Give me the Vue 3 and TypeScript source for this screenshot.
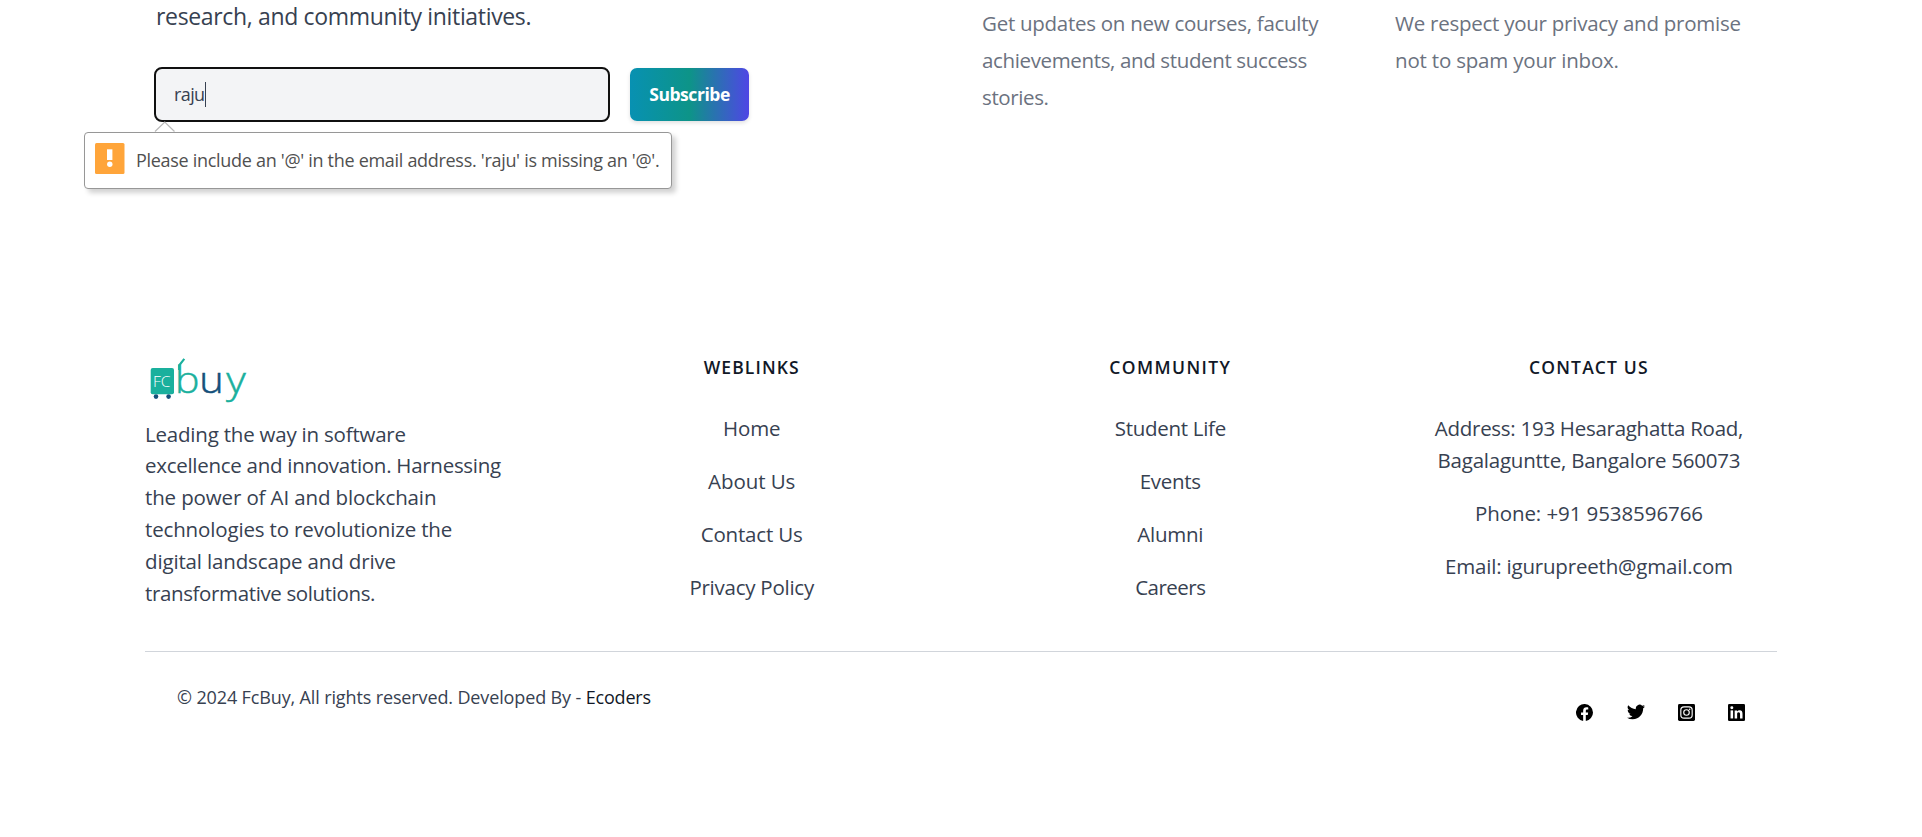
<script setup lang="ts">
import { ref } from 'vue'

interface Line {
  text: string
  tracking: number
}
interface LinkColumn {
  title: Line
  items: Line[][]
}

const line = (text: string, tracking: number): Line => ({ text, tracking })
const track = (l: Line) => ({ letterSpacing: `${l.tracking}px` })

const email = ref('raju')

const intro = line('research, and community initiatives.', -0.34)
const warning = line("Please include an '@' in the email address. 'raju' is missing an '@'.", -0.3)

const features: Line[][] = [
  [
    line('Get updates on new courses, faculty', -0.27),
    line('achievements, and student success', -0.36),
    line('stories.', -0.39),
  ],
  [line('We respect your privacy and promise', -0.25), line('not to spam your inbox.', -0.19)],
]

const about: Line[] = [
  line('Leading the way in software', -0.21),
  line('excellence and innovation. Harnessing', -0.28),
  line('the power of AI and blockchain', -0.13),
  line('technologies to revolutionize the', -0.15),
  line('digital landscape and drive', -0.15),
  line('transformative solutions.', -0.37),
]

const columns: LinkColumn[] = [
  {
    title: line('WEBLINKS', 1.1),
    items: [
      [line('Home', -0.14)],
      [line('About Us', -0.07)],
      [line('Contact Us', -0.16)],
      [line('Privacy Policy', -0.25)],
    ],
  },
  {
    title: line('COMMUNITY', 1.4),
    items: [
      [line('Student Life', -0.29)],
      [line('Events', -0.28)],
      [line('Alumni', -0.25)],
      [line('Careers', -0.5)],
    ],
  },
  {
    title: line('CONTACT US', 1.15),
    items: [
      [line('Address: 193 Hesaraghatta Road,', -0.28), line('Bagalaguntte, Bangalore 560073', -0.23)],
      [line('Phone: +91 9538596766', -0.08)],
      [line('Email: igurupreeth@gmail.com', -0.19)],
    ],
  },
]
</script>

<template>
  <div class="page">
    <section class="newsletter">
      <div class="signup">
        <p class="intro" :style="track(intro)">{{ intro.text }}</p>
        <form class="form" @submit.prevent>
          <div class="field">
            <span class="value">{{ email }}</span><span class="caret"></span>
          </div>
          <button class="subscribe" type="submit">Subscribe</button>
        </form>
      </div>
      <p v-for="(feature, i) in features" :key="i" class="feature">
        <span v-for="l in feature" :key="l.text" class="line" :style="track(l)">{{ l.text }}</span>
      </p>

      <div class="bubble" role="alert">
        <svg class="arrow" width="22" height="12" viewBox="0 0 22 12">
          <path d="M1 10.5 10.8 1 20.5 10.5" fill="#fff" stroke="#b9b9b9" stroke-width="1.2" />
        </svg>
        <svg class="alert" width="30" height="31" viewBox="0 0 30 31">
          <rect width="29.5" height="31" rx="1.5" fill="#ffa53a" />
          <rect x="12" y="6.3" width="5.4" height="10.7" fill="#fff" />
          <circle cx="14.8" cy="21.3" r="2.7" fill="#fff" />
        </svg>
        <span class="warning" :style="track(warning)">{{ warning.text }}</span>
      </div>
    </section>

    <footer class="footer">
      <div class="columns">
        <div class="brand">
          <svg class="logo" width="110" height="65" viewBox="145 353 110 65">
            <rect x="150.7" y="368" width="23.3" height="26.2" rx="2" fill="#1ab09d" />
            <circle cx="156" cy="396.6" r="2.3" fill="#14507a" />
            <circle cx="168.6" cy="396.6" r="2.3" fill="#14507a" />
            <text x="153" y="387" class="logo-mark" textLength="17.5" lengthAdjust="spacingAndGlyphs">FC</text>
            <path d="M184.300 358.900 179.200 365.400V370" fill="none" stroke="#1ab09d" stroke-width="2.200" />
            <text x="174.900" y="393.400" class="logo-word" textLength="24.500" lengthAdjust="spacingAndGlyphs">b</text>
            <text x="199.300" y="393.400" class="logo-word navy" textLength="24.500" lengthAdjust="spacingAndGlyphs">u</text>
            <text x="226.300" y="393.400" class="logo-word" textLength="19.500" lengthAdjust="spacingAndGlyphs">y</text>
          </svg>
          <p class="about">
            <span v-for="l in about" :key="l.text" class="line" :style="track(l)">{{ l.text }}</span>
          </p>
        </div>
        <nav v-for="col in columns" :key="col.title.text" class="links">
          <h3 :style="track(col.title)">{{ col.title.text }}</h3>
          <ul>
            <li v-for="(item, i) in col.items" :key="i">
              <span v-for="l in item" :key="l.text" class="line" :style="track(l)">{{ l.text }}</span>
            </li>
          </ul>
        </nav>
      </div>

      <div class="bottom">
        <p class="copyright">© 2024 FcBuy, All rights reserved. Developed By - <a>Ecoders</a></p>
        <div class="social">
          <svg viewBox="0 0 24 24">
            <path d="M24 12a12 12 0 1 0-13.9 11.85v-8.4H7.1V12h3V9.4c0-3 1.8-4.7 4.5-4.7 1.3 0 2.7.24 2.7.24v2.95h-1.5c-1.5 0-1.95.93-1.95 1.88V12h3.3l-.53 3.46h-2.8v8.4A12 12 0 0 0 24 12z" />
          </svg>
          <svg class="wide" viewBox="0 0 24 24">
            <path d="M24 4.56a9.8 9.8 0 0 1-2.83.78 4.94 4.94 0 0 0 2.17-2.73 9.9 9.9 0 0 1-3.13 1.2 4.92 4.92 0 0 0-8.38 4.48A13.98 13.98 0 0 1 1.67 3.15a4.93 4.93 0 0 0 1.52 6.57 4.9 4.9 0 0 1-2.23-.61v.06a4.93 4.93 0 0 0 3.95 4.83 4.9 4.9 0 0 1-2.22.08 4.93 4.93 0 0 0 4.6 3.42A9.9 9.9 0 0 1 0 19.54a13.94 13.94 0 0 0 7.55 2.21c9.05 0 14-7.5 14-13.99l-.02-.63A9.94 9.94 0 0 0 24 4.56z" />
          </svg>
          <svg viewBox="0 0 24 24">
            <rect width="24" height="24" rx="2" />
            <g fill="none" stroke="#fff" stroke-width="1.6">
              <rect x="4" y="4" width="16" height="16" rx="4.5" />
              <circle cx="12" cy="12" r="3.9" />
            </g>
            <circle cx="16.5" cy="7.5" r="1.1" fill="#fff" />
          </svg>
          <svg viewBox="0 0 24 24">
            <rect width="24" height="24" rx="1.8" />
            <g fill="#fff">
              <circle cx="5.4" cy="5.4" r="2.1" />
              <rect x="3.6" y="9" width="3.6" height="11.4" />
              <path d="M9.4 9h3.4v1.6c.6-1.1 1.8-1.9 3.5-1.9 3.4 0 4.2 2.2 4.2 5.3v6.4H17v-5.700c0-1.500-.2-2.900-2-2.900s-2.100 1.300-2.100 2.800v5.800H9.400z" />
            </g>
          </svg>
        </div>
      </div>
    </footer>
  </div>
</template>

<style>
body {
  margin: 0;
  background: #fff;
}
</style>

<style scoped>
.page {
  box-sizing: border-box;
  height: 837px;
  padding: 0 145px;
  overflow: hidden;
  font-family: "Open Sans", "Noto Sans", sans-serif;
  font-size: 20.5px;
  line-height: 32px;
  color: #374151;
}
p,
h3,
ul {
  margin: 0;
  padding: 0;
}
ul {
  list-style: none;
}
.line {
  display: block;
  white-space: nowrap;
}
.newsletter {
  position: relative;
  display: grid;
  grid-template-columns: 828px 413px 1fr;
  padding-left: 9px;
  box-sizing: border-box;
  height: 353px;
}
.intro {
  margin: -1px 0 0 2px;
  font-size: 23px;
  line-height: 34px;
}
.form {
  display: flex;
  align-items: center;
  gap: 20px;
  margin-top: 34px;
  height: 55px;
}
.field {
  box-sizing: border-box;
  display: flex;
  align-items: center;
  width: 456px;
  height: 55px;
  padding-left: 18px;
  border: 2px solid #101010;
  border-radius: 8px;
  background: #f3f4f6;
  font-size: 18px;
  letter-spacing: -0.6px;
}
.value {
  margin-top: -2px;
}
.caret {
  width: 1px;
  height: 25px;
  background: #374151;
}
.subscribe {
  width: 119px;
  height: 53px;
  padding: 0 0 1px;
  border: 0;
  border-radius: 7px;
  background: linear-gradient(to right, #0891b2, #0d9488, #4f46e5);
  box-shadow: 0 2px 4px rgba(0, 0, 0, 0.12);
  color: #fff;
  font: 700 17.5px "Open Sans", sans-serif;
  letter-spacing: -0.45px;
}
.feature {
  padding-top: 5px;
  line-height: 37px;
  color: #6b7280;
}
.bubble {
  position: absolute;
  left: -61px;
  top: 132px;
  box-sizing: border-box;
  display: flex;
  align-items: center;
  width: 588px;
  height: 57px;
  padding-left: 10px;
  border: 1px solid #979797;
  border-radius: 4px;
  background: #fff;
  box-shadow: 4px 4px 5px rgba(0, 0, 0, 0.18);
  color: #505050;
  font-size: 18px;
  white-space: nowrap;
}
.alert {
  margin: -4px 11px 0 0;
}
.warning {
  margin-top: -2px;
}
.arrow {
  position: absolute;
  left: 69px;
  top: -12px;
}
.columns {
  display: grid;
  grid-template-columns: repeat(4, 1fr);
  column-gap: 42.5px;
  height: 298px;
}
.logo {
  display: block;
}
.logo-mark {
  font: 300 14px "Open Sans", sans-serif;
  fill: #fff;
}
.logo-word {
  font: 300 37px "Open Sans", sans-serif;
  fill: #1ab09d;
  stroke: #1ab09d;
  stroke-width: 0.5px;
}
.logo-word.navy {
  fill: #14507a;
  stroke: #14507a;
}
.about {
  padding-top: 0.7px;
  line-height: 31.8px;
}
.links {
  text-align: center;
}
.links h3 {
  margin-bottom: 31px;
  color: #111827;
  font-size: 17.5px;
  font-weight: 600;
  line-height: 28px;
}
.links li {
  margin-bottom: 21px;
}
.bottom {
  display: flex;
  justify-content: space-between;
  padding: 34px 32px 0;
  border-top: 1px solid #d1d5db;
}
.copyright {
  margin-top: -3px;
  font-size: 18px;
  line-height: 28px;
  letter-spacing: -0.13px;
}
.copyright a {
  color: #111827;
  letter-spacing: -0.2px;
}
.social {
  display: flex;
  align-items: center;
  gap: 33.2px;
  height: 52px;
}
.social svg {
  width: 17px;
  height: 17px;
}
.social .wide {
  width: 18px;
  height: 18px;
}
</style>
